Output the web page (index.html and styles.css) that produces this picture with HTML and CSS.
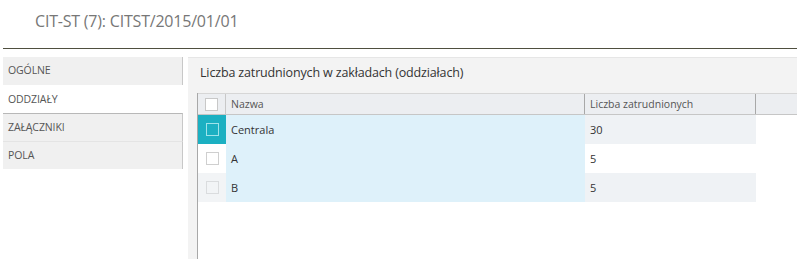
FILE: index.html
```html
<!DOCTYPE html>
<html lang="pl">
<head>
<meta charset="utf-8">
<title>CIT-ST</title>
<link rel="stylesheet" href="styles.css">
</head>
<body>
<header class="page-header">
  <h1 class="page-title">CIT-ST (7): CITST/2015/01/01</h1>
</header>
<div class="layout">
  <nav class="tabs">
    <div class="tab">OGÓLNE</div>
    <div class="tab tab-active">ODDZIAŁY</div>
    <div class="tab">ZAŁĄCZNIKI</div>
    <div class="tab">POLA</div>
  </nav>
  <section class="panel">
    <h2 class="panel-title">Liczba zatrudnionych w zakładach (oddziałach)</h2>
    <div class="grid">
      <div class="row head">
        <div class="cell chk"><span class="box"></span></div>
        <div class="cell name">Nazwa</div>
        <div class="cell num">Liczba zatrudnionych</div>
        <div class="cell filler"></div>
      </div>
      <div class="row selected">
        <div class="cell chk"><span class="box"></span></div>
        <div class="cell name">Centrala</div>
        <div class="cell num">30</div>
      </div>
      <div class="row">
        <div class="cell chk"><span class="box"></span></div>
        <div class="cell name">A</div>
        <div class="cell num">5</div>
      </div>
      <div class="row alt">
        <div class="cell chk"><span class="box"></span></div>
        <div class="cell name">B</div>
        <div class="cell num">5</div>
      </div>
    </div>
  </section>
</div>
</body>
</html>
```

FILE: styles.css
```css
* { box-sizing: border-box; }
html, body { margin: 0; padding: 0; height: 100%; }
body {
  font-family: "Open Sans", "Noto Sans", sans-serif;
  color: #333;
  background: #fff;
  overflow: hidden;
}
.page-header {
  height: 49px;
  margin-left: 3px;
  border-bottom: 1px solid #4f4f3f;
  padding-left: 32px;
}
.page-title {
  margin: 0;
  padding-top: 10px;
  font-size: 16px;
  font-weight: 400;
  color: #777;
  letter-spacing: -0.2px;
  line-height: 22px;
}
.layout {
  display: flex;
  margin-left: 3px;
  padding-top: 8px;
  height: calc(100% - 49px);
}
.tabs {
  width: 180px;
  flex: none;
}
.tab {
  height: 28px;
  line-height: 27px;
  padding-left: 5px;
  font-size: 10.5px;
  color: #555;
  background: #f0f0f0;
  border-right: 1px solid #c8c8c8;
  letter-spacing: -0.1px;
}
.tab + .tab { border-top: 1px solid #e4e4e4; }
.tab-active {
  background: #fff;
  border-right-color: transparent;
  border-top-color: #fff !important;
}
.tab-active + .tab { border-top: 1px solid #b8b8b8; }
.panel {
  flex: 1;
  margin-left: 5px;
  background: #f3f3f3;
  padding-left: 9px;
  border-top: 1px solid #e6e6e6;
  display: flex;
  flex-direction: column;
}
.panel-title {
  margin: 0;
  height: 35px;
  padding-left: 3px;
  padding-top: 6px;
  font-size: 12.5px;
  font-weight: 400;
  color: #333;
  letter-spacing: -0.15px;
  line-height: 18px;
}
.grid {
  flex: 1;
  background: #fff;
  border-left: 1px solid #a8a8a8;
}
.row {
  display: flex;
  height: 29px;
  font-size: 11px;
  color: #333;
}
.row.head {
  height: 22px;
  background: #eceef1;
  border-top: 1px solid #d6d6d6;
  border-bottom: 1px solid #c6c6c6;
  color: #555;
  font-size: 10.5px;
}
.cell {
  display: flex;
  align-items: center;
  padding-left: 5px;
}
.chk {
  width: 28px;
  padding-left: 0;
  justify-content: center;
}
.name { width: 359px; background: #def1fa; }
.num { width: 171px; }
.filler { flex: 1; }
.head .name { background: transparent; border-right: 1px solid #a8a8a8; }
.head .chk { border-right: 1px solid #c8c8c8; }
.head .num { border-right: 1px solid #a8a8a8; }
.box {
  width: 13px;
  height: 13px;
  border: 1px solid #cfcfcf;
  background: #fff;
}
.head .box { border-color: #c8c8c8; }
.selected .chk { background: #1bb0c2; }
.selected .box { background: #1bb0c2; border-color: #9fe3ea; }
.selected .num { background: #eff2f5; }
.alt .chk { background: #f2f4f6; }
.alt .box { background: #f2f4f6; border-color: #dadcde; }
.alt .num { background: #eff2f5; }
```
